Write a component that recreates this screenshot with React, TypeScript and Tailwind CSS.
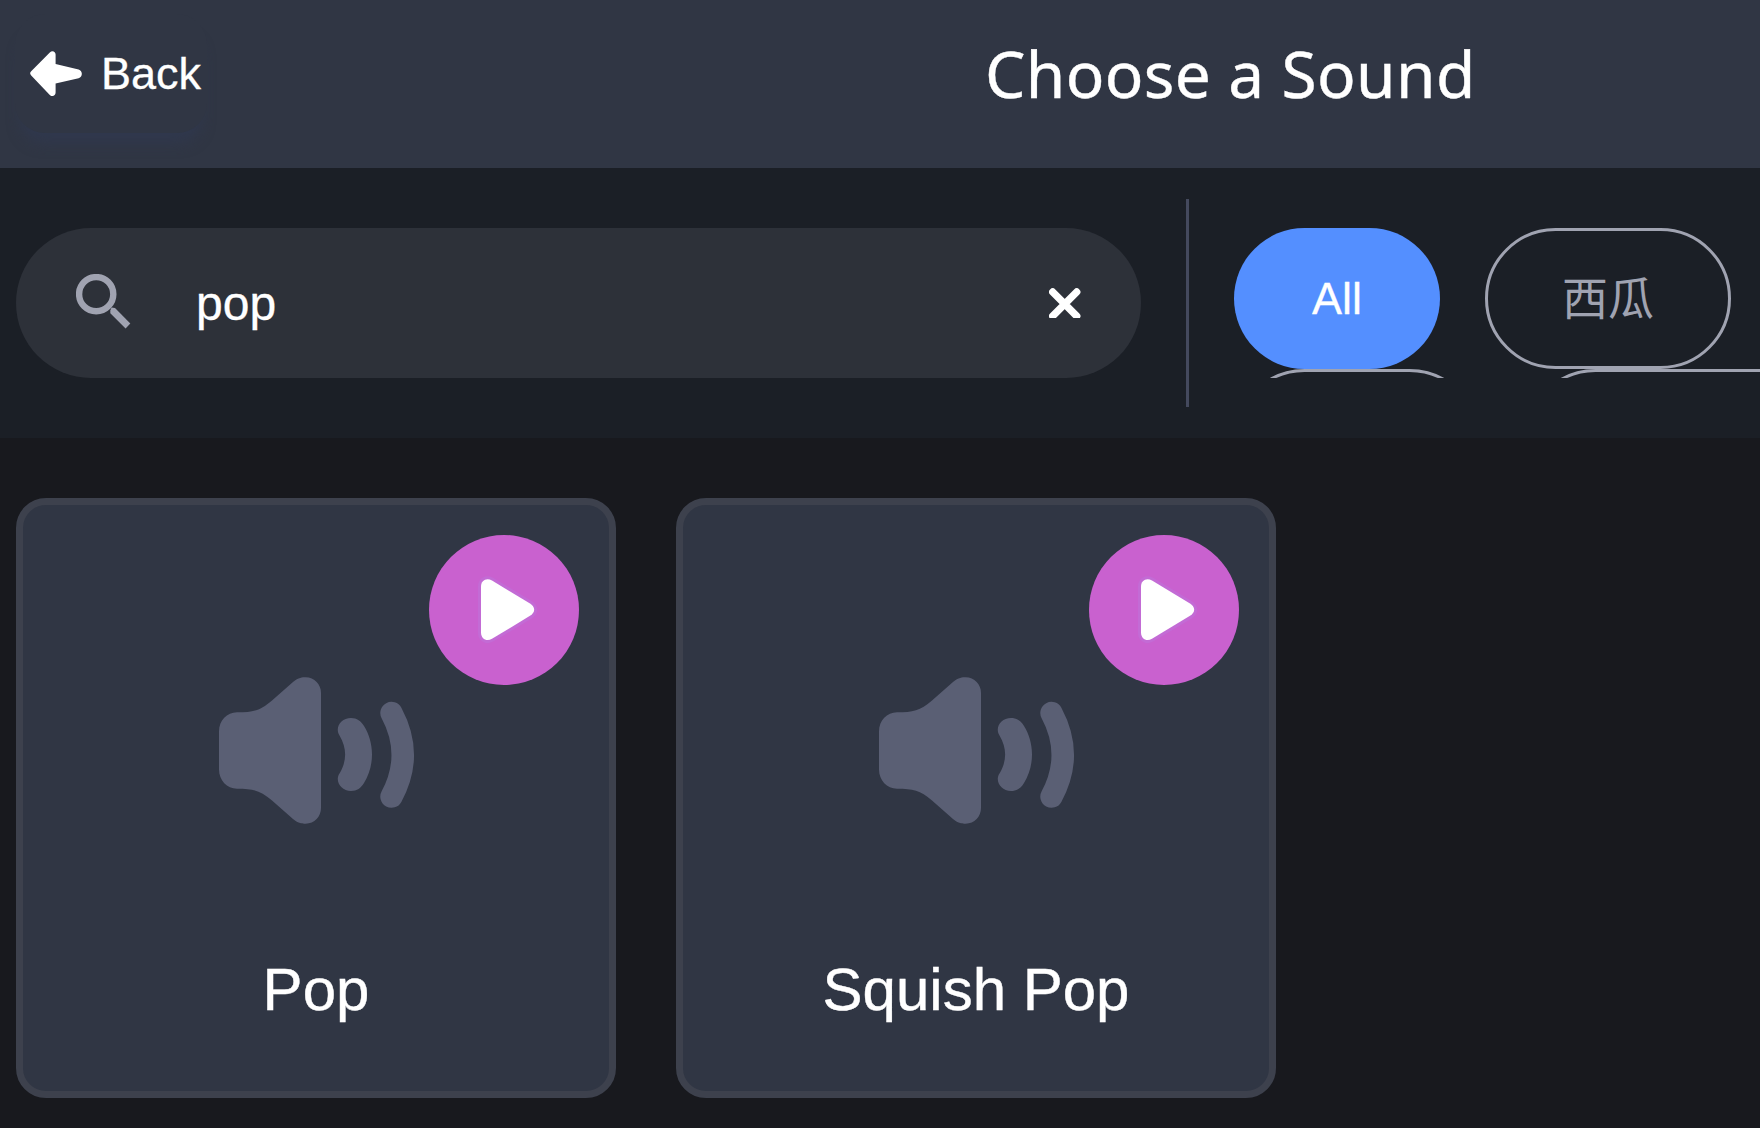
const FONT = "font-['Liberation_Sans','Noto_Sans_CJK_SC',sans-serif]";

function BackArrow() {
  return (
    <svg className="block h-[46px] w-[52px] shrink-0" viewBox="0 0 52 46" fill="#fff">
      <path d="M1.2 20.2 L19.8 1.4 C22.2 -0.9 25.6 0.4 25.6 3.6 V12.9 L48.6 18.5 C52.9 19.7 52.9 26 48.6 27.2 L25.6 32.4 V41.6 C25.6 44.9 22.2 46.2 19.8 43.9 L1.2 24.6 C-0.2 23 -0.2 21.7 1.2 20.2 Z" />
    </svg>
  );
}

function SearchIcon() {
  return (
    <svg className="mb-[2px] block h-[56px] w-[56px] shrink-0" viewBox="0 0 56 56" fill="none" stroke="#a0a3b1">
      <circle cx="20.2" cy="20.2" r="17.1" strokeWidth="6.4" />
      <path d="M34.3 36.5 L35.5 33.6 L39 34 L54.3 49.4 L49.6 54.4 L34.3 39.2 Z" fill="#a0a3b1" stroke="none" />
    </svg>
  );
}

function ClearIcon() {
  return (
    <svg className="block h-[30px] w-[32px] shrink-0" viewBox="0 0 32 30">
      <path d="M3.700 4 L27.700 28 M27.700 4 L3.700 28" stroke="#fff" strokeWidth="7.4" strokeLinecap="round" />
    </svg>
  );
}

function SpeakerIcon() {
  return (
    <svg className="block h-[148px] w-[196px]" viewBox="0 0 196 148" fill="#5a5f74">
      <path d="M0 54.5 C0 43.5 8 35.5 18 35.3 C34 35.3 41 33.8 53 23.5 L74 5 C79.5 0.5 83.5 0.3 86.5 0.3 C95.5 0.3 102 7.5 102 16 V131 C102 139.5 95.5 146.7 86.5 146.7 C83.5 146.7 79.5 146.5 74 142 L53 123.5 C41 113.2 34 111.7 18 111.7 C8 111.5 0 103.5 0 92.5 Z" />
      <path d="M132 41 C138 41 142 44 145 49 C150 57 153 67 153 77.5 C153 88 150 98 145 106 C142 111 138 114 132 114 C122 114 115.5 104 120.5 96.5 C128 84 128 71 120.5 58.5 C115.5 50.5 122 41 132 41 Z" />
      <path d="M172.5 36 Q195 78 172.5 119.6" fill="none" stroke="#5a5f74" strokeWidth="22.4" strokeLinecap="round" />
    </svg>
  );
}

function PlayButton() {
  return (
    <button className="absolute top-[30px] right-[30px] flex h-[150px] w-[150px] items-center justify-center rounded-full bg-[#c961cf] pl-[6px]">
      <svg className="block h-[72px] w-[64px]" viewBox="0 0 64 72">
        <path
          d="M6 12.7 C6 6.5 11.5 3.4 17 6.6 L54.6 29.2 C60.7 33 60.7 38.4 54.6 42.1 L17 64.8 C11.5 68 6 64.8 6 58.5 Z"
          fill="#fff"
          stroke="#c36bd5"
          strokeWidth="6"
          paintOrder="stroke"
        />
      </svg>
    </button>
  );
}

function SoundCard({ name }: { name: string }) {
  return (
    <div className="relative flex h-[600px] w-[600px] flex-col items-center rounded-[30px] border-[7px] border-[#3d414d] bg-[#303644]">
      <PlayButton />
      <div className="mt-[172px] flex pl-[2px]">
        <SpeakerIcon />
      </div>
      <div className="mt-[130px] text-[60px] leading-[70px] text-white [-webkit-text-stroke:0.4px_#fff]">{name}</div>
    </div>
  );
}

const pill = "flex h-[141px] shrink-0 items-center justify-center rounded-full text-[45px] whitespace-nowrap";
const outlined = "border-[3px] border-[#a0a3b1] text-[#a0a3b1]";

export default function App() {
  return (
    <div className={`flex h-[1128px] w-[1760px] flex-col overflow-hidden bg-[#18191e] ${FONT}`}>
      <header className="flex h-[168px] shrink-0 bg-[#303644] pt-[14px]">
        <button className="ml-[15px] flex h-[119px] w-[192px] shrink-0 items-center rounded-[30px] bg-[#303644] pl-[15px] text-[45px] text-white shadow-[0_16px_14px_-6px_#30384d] [-webkit-text-stroke:0.3px_#fff]">
          <BackArrow />
          <span className="ml-[19px] leading-[52px]">Back</span>
        </button>
        <h1 className="ml-[778px] h-[120px] font-['Noto_Sans','Open_Sans',sans-serif] text-[64px] leading-[120px] tracking-[0.35px] whitespace-nowrap text-white [-webkit-text-stroke:0.4px_#fff]">
          Choose a Sound
        </h1>
      </header>

      <div className="flex h-[270px] shrink-0 items-start bg-[#1b1f26]">
        <div className="mt-[60px] ml-[16px] flex h-[150px] w-[1125px] shrink-0 items-center rounded-full bg-[#2d3139] pr-[60px] pl-[60px]">
          <SearchIcon />
          <div className="ml-[64px] flex-1 pt-[1px] text-[48px] leading-[56px] text-white [-webkit-text-stroke:0.3px_#fff]">
            pop
          </div>
          <ClearIcon />
        </div>
        <div className="mt-[31px] ml-[45px] h-[208px] w-[3px] shrink-0 bg-[#44495d]" />
        <div className="mt-[60px] ml-[45px] h-[150px] flex-1 overflow-hidden">
          <div className="flex gap-[45px]">
            <div className={`${pill} w-[206px] bg-[#548fff] text-white [-webkit-text-stroke:0.3px_#fff]`}>All</div>
            <div className={`${pill} w-[246px] pt-[2px] ${outlined}`}>
              <span className="text-[46px]">西瓜</span>
            </div>
          </div>
          <div className="flex gap-[45px]">
            <div className={`${pill} w-[246px] ${outlined}`} />
            <div className={`${pill} w-[420px] ${outlined}`} />
          </div>
        </div>
      </div>

      <main className="flex gap-[60px] pt-[60px] pl-[16px]">
        <SoundCard name="Pop" />
        <SoundCard name="Squish Pop" />
      </main>
    </div>
  );
}
